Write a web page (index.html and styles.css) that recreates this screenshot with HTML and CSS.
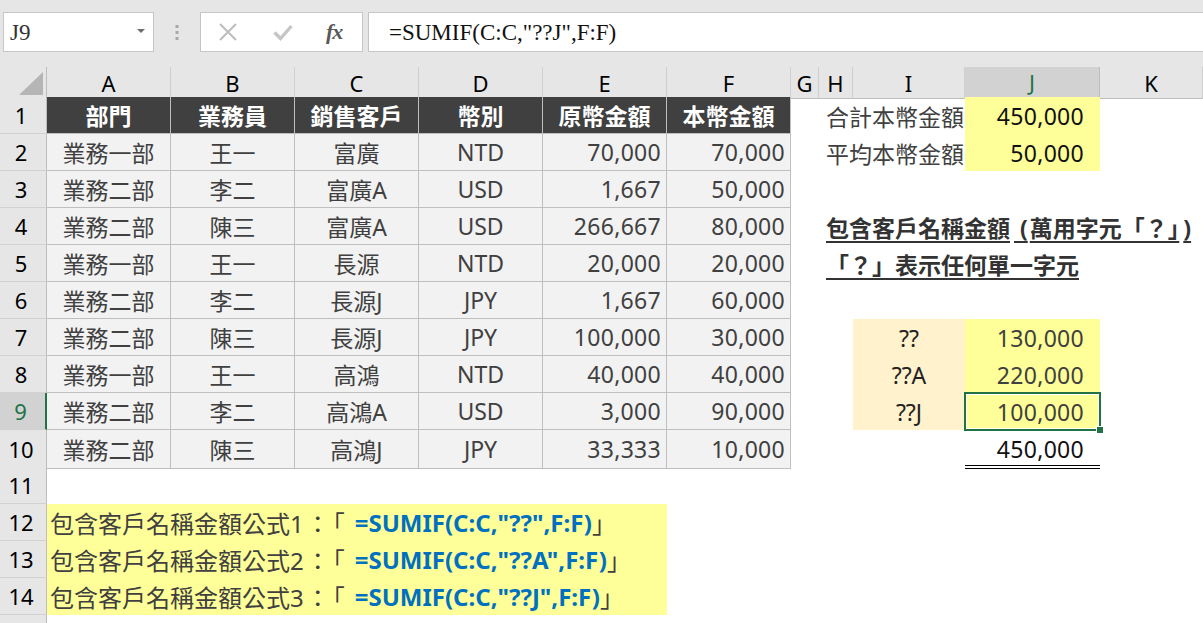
FILE: index.html
```html
<!DOCTYPE html>
<html lang="zh-Hant">
<head>
<meta charset="utf-8">
<title>SUMIF</title>
<link rel="stylesheet" href="styles.css">
</head>
<body>
<div class="topbar">
  <div class="namebox"><span>J9</span><svg class="dd" width="8" height="5" viewBox="0 0 8 5"><path d="M0 0H8L4 4Z" fill="#6d6d6d"/></svg></div>
  <div class="dots"><svg width="4" height="15" viewBox="0 0 4 15"><rect x="0.5" y="0" width="3" height="3" fill="#a8a8a8"/><rect x="0.5" y="6" width="3" height="3" fill="#a8a8a8"/><rect x="0.5" y="12" width="3" height="3" fill="#a8a8a8"/></svg></div>
  <div class="fxbox">
    <svg class="ic-x" width="20" height="20" viewBox="0 0 20 20"><path d="M2 2L18 18M18 2L2 18" stroke="#bdbdbd" stroke-width="2" fill="none"/></svg>
    <svg class="ic-ok" width="20" height="20" viewBox="0 0 20 20"><path d="M1.5 10.5L7.5 16.5L18.5 4" stroke="#c6c6c6" stroke-width="3.4" fill="none"/></svg>
    <span class="fx">fx</span>
  </div>
  <div class="formula">=SUMIF(C:C,"??J",F:F)</div>
</div>

<div class="sheet">
  <div class="row hdr">
    <div class="c corner"><svg width="24" height="23" viewBox="0 0 24 23"><path d="M24 0V23H0Z" fill="#b5b5b5"/></svg></div>
    <div class="c ch">A</div><div class="c ch">B</div><div class="c ch">C</div><div class="c ch">D</div><div class="c ch">E</div><div class="c ch">F</div><div class="c ch">G</div><div class="c ch">H</div><div class="c ch">I</div><div class="c ch sel">J</div><div class="c ch">K</div>
  </div>

  <div class="row">
    <div class="c rh">1</div>
    <div class="c th">部門</div><div class="c th">業務員</div><div class="c th">銷售客戶</div><div class="c th">幣別</div><div class="c th">原幣金額</div><div class="c th">本幣金額</div>
    <div class="c"></div><div class="c lbl span2">合計本幣金額</div><div class="c yel num jn blk">450,000</div><div class="c"></div>
  </div>
  <div class="row">
    <div class="c rh">2</div>
    <div class="c td">業務一部</div><div class="c td">王一</div><div class="c td">富廣</div><div class="c td">NTD</div><div class="c td num">70,000</div><div class="c td num">70,000</div>
    <div class="c"></div><div class="c lbl span2">平均本幣金額</div><div class="c yel num jn blk">50,000</div><div class="c"></div>
  </div>
  <div class="row">
    <div class="c rh">3</div>
    <div class="c td">業務二部</div><div class="c td">李二</div><div class="c td">富廣A</div><div class="c td">USD</div><div class="c td num">1,667</div><div class="c td num">50,000</div>
    <div class="c"></div><div class="c"></div><div class="c"></div><div class="c"></div><div class="c"></div>
  </div>
  <div class="row">
    <div class="c rh">4</div>
    <div class="c td">業務二部</div><div class="c td">陳三</div><div class="c td">富廣A</div><div class="c td">USD</div><div class="c td num">266,667</div><div class="c td num">80,000</div>
    <div class="c"></div><div class="c lbl note span4"><span class="u">包含客戶名稱金額<span class="par"> (</span>萬用字元「？」<span class="par2">)</span></span></div>
  </div>
  <div class="row">
    <div class="c rh">5</div>
    <div class="c td">業務一部</div><div class="c td">王一</div><div class="c td">長源</div><div class="c td">NTD</div><div class="c td num">20,000</div><div class="c td num">20,000</div>
    <div class="c"></div><div class="c lbl note span4"><span class="u">「？」表示任何單一字元</span></div>
  </div>
  <div class="row">
    <div class="c rh">6</div>
    <div class="c td">業務二部</div><div class="c td">李二</div><div class="c td">長源J</div><div class="c td">JPY</div><div class="c td num">1,667</div><div class="c td num">60,000</div>
    <div class="c"></div><div class="c"></div><div class="c"></div><div class="c"></div><div class="c"></div>
  </div>
  <div class="row">
    <div class="c rh">7</div>
    <div class="c td">業務二部</div><div class="c td">陳三</div><div class="c td">長源J</div><div class="c td">JPY</div><div class="c td num">100,000</div><div class="c td num">30,000</div>
    <div class="c"></div><div class="c"></div><div class="c crit">??</div><div class="c yel num jn">130,000</div><div class="c"></div>
  </div>
  <div class="row">
    <div class="c rh">8</div>
    <div class="c td">業務一部</div><div class="c td">王一</div><div class="c td">高鴻</div><div class="c td">NTD</div><div class="c td num">40,000</div><div class="c td num">40,000</div>
    <div class="c"></div><div class="c"></div><div class="c crit">??A</div><div class="c yel num jn">220,000</div><div class="c"></div>
  </div>
  <div class="row">
    <div class="c rh rsel">9</div>
    <div class="c td">業務二部</div><div class="c td">李二</div><div class="c td">高鴻A</div><div class="c td">USD</div><div class="c td num">3,000</div><div class="c td num">90,000</div>
    <div class="c"></div><div class="c"></div><div class="c crit">??J</div><div class="c yel num jn active">100,000</div><div class="c"></div>
  </div>
  <div class="row">
    <div class="c rh">10</div>
    <div class="c td">業務二部</div><div class="c td">陳三</div><div class="c td">高鴻J</div><div class="c td">JPY</div><div class="c td num">33,333</div><div class="c td num">10,000</div>
    <div class="c"></div><div class="c"></div><div class="c"></div><div class="c num jn blk dbl">450,000</div><div class="c"></div>
  </div>
  <div class="row">
    <div class="c rh">11</div>
  </div>
  <div class="row">
    <div class="c rh">12</div>
    <div class="c yel expl span5">包含客戶名稱金額公式1<span class="pq">：「</span><span class="f">=SUMIF(C:C,"??",F:F)</span>」</div>
  </div>
  <div class="row">
    <div class="c rh">13</div>
    <div class="c yel expl span5">包含客戶名稱金額公式2<span class="pq">：「</span><span class="f">=SUMIF(C:C,"??A",F:F)</span>」</div>
  </div>
  <div class="row">
    <div class="c rh">14</div>
    <div class="c yel expl span5">包含客戶名稱金額公式3<span class="pq">：「</span><span class="f">=SUMIF(C:C,"??J",F:F)</span>」</div>
  </div>
  <div class="row">
    <div class="c rh"></div>
  </div>
</div>
</body>
</html>
```

FILE: styles.css
```css
html, body {
  margin: 0;
  padding: 0;
}
body {
  width: 1203px;
  height: 623px;
  overflow: hidden;
  background: #ffffff;
  font-family: "Noto Sans", "Noto Sans CJK TC", sans-serif;
}

/* ---------- formula bar ---------- */
.topbar {
  height: 67px;
  box-sizing: border-box;
  padding-top: 12px;
  background: #e6e6e6;
  display: flex;
  align-items: flex-start;
}
.namebox {
  margin-left: 3px;
  width: 151px;
  height: 40px;
  box-sizing: border-box;
  border: 1px solid #c6c6c6;
  background: #fff;
  display: flex;
  align-items: center;
  justify-content: space-between;
  padding: 2px 8px 0 6px;
  font-family: "Liberation Serif", serif;
  font-size: 23px;
  color: #333;
}
.namebox .dd {
  margin-top: -4px;
}
.dots {
  width: 46px;
  height: 40px;
  display: flex;
  align-items: center;
  justify-content: center;
}
.fxbox {
  width: 163px;
  height: 40px;
  box-sizing: border-box;
  border: 1px solid #c6c6c6;
  background: #fff;
  display: flex;
  align-items: center;
  padding-left: 17px;
}
.ic-ok {
  margin-left: 35px;
}
.fx {
  margin-left: 33px;
  font-family: "Liberation Serif", serif;
  font-style: italic;
  font-weight: bold;
  font-size: 22px;
  color: #595959;
  letter-spacing: -1px;
}
.formula {
  margin-left: 5px;
  flex: 1;
  height: 40px;
  box-sizing: border-box;
  border: 1px solid #c6c6c6;
  border-right: none;
  background: #fff;
  padding: 3px 0 0 20px;
  font-family: "Liberation Serif", serif;
  font-size: 23px;
  line-height: 34px;
  color: #111;
  white-space: nowrap;
}

/* ---------- sheet ---------- */
.row {
  display: grid;
  grid-template-columns: 47px 124px 124px 124px 124px 124px 124px 28px 34px 112px 135px 103px;
  height: 37px;
}
.row.hdr {
  height: 30px;
}
.c {
  box-sizing: border-box;
  display: flex;
  align-items: center;
  white-space: nowrap;
  font-size: 23px;
  color: #404040;
  min-width: 0;
}
.span2 { grid-column: span 2; }
.span4 { grid-column: span 4; }
.span5 { grid-column: span 5; }

.corner {
  background: #e6e6e6;
  border-right: 1px solid #bdbdbd;
  border-bottom: 1px solid #bdbdbd;
  justify-content: flex-end;
  align-items: flex-end;
  padding: 0 3px 3px 0;
}
.ch {
  background: #e6e6e6;
  border-right: 1px solid #cfcfcf;
  border-bottom: 1px solid #bdbdbd;
  justify-content: center;
  color: #000;
  font-size: 22px;
}
.ch.sel {
  background: #d2d2d2;
  color: #217346;
  border-bottom: 2px solid #217346;
  border-right-color: #bdbdbd;
}
.rh {
  background: #e6e6e6;
  border-right: 1px solid #bdbdbd;
  border-bottom: 1px solid #d2d2d2;
  justify-content: center;
  padding-right: 4px;
  color: #000;
  font-size: 22px;
}
.rh.rsel {
  background: #d2d2d2;
  color: #217346;
  border-right: 2px solid #217346;
}

.th {
  background: #404040;
  color: #fff;
  font-weight: bold;
  justify-content: center;
  border-right: 1px solid #bfbfbf;
  border-bottom: 1px solid #bfbfbf;
}
.td {
  background: #f2f2f2;
  justify-content: center;
  border-right: 1px solid #bfbfbf;
  border-bottom: 1px solid #bfbfbf;
}
.td.num {
  justify-content: flex-end;
  padding-right: 5px;
}
.num {
  letter-spacing: 0.3px;
}

.yel {
  background: #ffff99;
}
.jn {
  justify-content: flex-end;
  padding-right: 16px;
}
.blk {
  color: #111;
}
.lbl {
  padding-left: 7px;
  color: #404040;
}
.note {
  font-weight: bold;
  color: #333;
}
.note .u {
  text-decoration: underline;
  text-decoration-thickness: 1.5px;
  text-underline-offset: 4px;
}
.note .par {
  padding-left: 4px;
  padding-right: 2px;
}
.note .par2 {
  padding-left: 4px;
}
.crit {
  background: #fff2cc;
  justify-content: center;
  color: #222;
}
.dbl {
  border-bottom: 4px double #000;
  padding-top: 3px;
}

.active {
  position: relative;
}
.active::after {
  content: "";
  position: absolute;
  top: -1px;
  left: -1px;
  right: -1px;
  bottom: -1px;
  border: 2px solid #217346;
  box-shadow: inset 0 0 0 1px #ffffff;
}
.active::before {
  content: "";
  position: absolute;
  right: -4px;
  bottom: -4px;
  width: 6px;
  height: 6px;
  background: #217346;
  border: 1px solid #ffffff;
  z-index: 2;
}

.expl {
  padding-left: 3px;
  font-size: 24px;
  color: #404040;
}
.expl .pq {
  letter-spacing: 3px;
  padding-left: 2px;
}
.expl .f {
  color: #0070c0;
  font-weight: bold;
  padding-left: 7px;
}
```
